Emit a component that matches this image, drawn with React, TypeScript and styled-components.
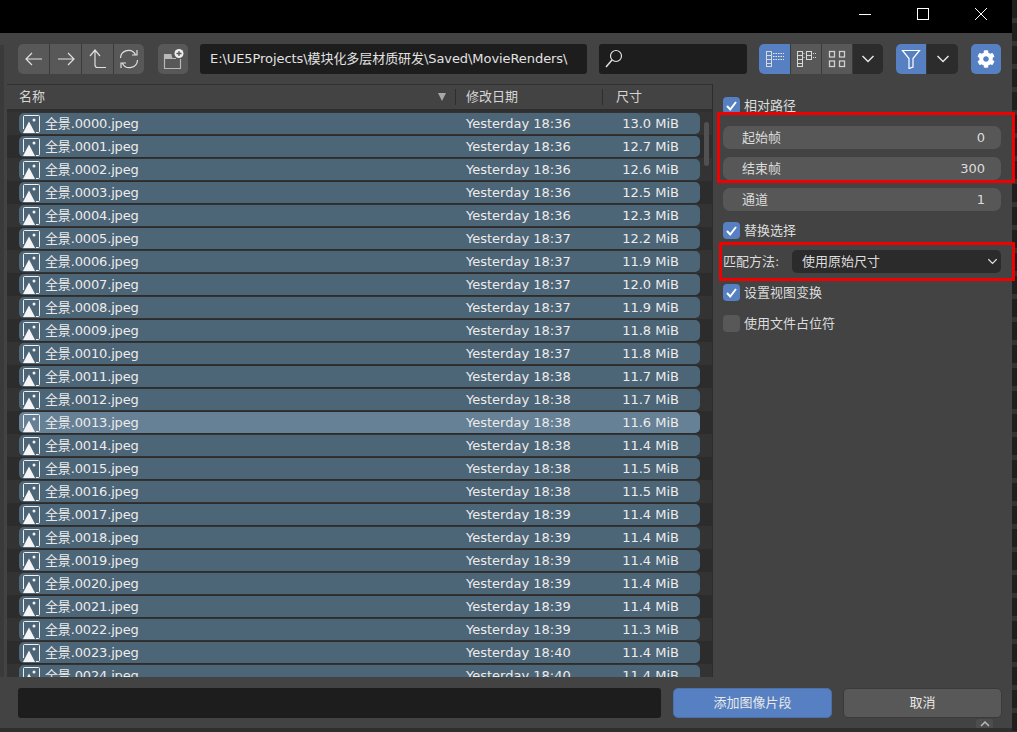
import React from "react";
import styled, { createGlobalStyle } from "styled-components";
import { FaCog } from "react-icons/fa";

const FONT = `"DejaVu Sans", "Noto Sans CJK SC", sans-serif`;

const GlobalStyle = createGlobalStyle`
  html, body {
    margin: 0;
    padding: 0;
    background: #434343;
    overflow: hidden;
  }
`;

const Page = styled.div`
  width: 1017px;
  height: 732px;
  display: flex;
  overflow: hidden;
  font-family: ${FONT};
  font-size: 13px;
  line-height: 16px;
  color: #e4e4e4;
`;
const Dialog = styled.div`
  width: 1012px;
  display: flex;
  flex-direction: column;
  background: #434343;
`;
const EdgeStrip = styled.div`
  width: 5px;
  background: repeating-linear-gradient(#1f1f1f 0 18px, #333 18px 23px);
`;
const TitleBar = styled.div`
  height: 33px;
  flex: none;
  background: #000;
  display: flex;
  justify-content: flex-end;
  padding-right: 2px;
`;
const WindowButton = styled.div`
  width: 58px;
  height: 27px;
  display: flex;
  align-items: center;
  justify-content: center;
`;
const Toolbar = styled.div`
  height: 51px;
  flex: none;
  box-sizing: border-box;
  padding: 11px 11px 0 18px;
  display: flex;
  align-items: flex-start;
`;
const Group = styled.div<{ $left?: number }>`
  display: flex;
  height: 30px;
  border-radius: 5px;
  overflow: hidden;
  margin-left: ${(p) => p.$left ?? 0}px;
  gap: 1px;
  background: #3a3a3a;
  flex: none;
`;
const ToolButton = styled.div<{ $w?: number; $on?: boolean; $dark?: boolean }>`
  width: ${(p) => p.$w ?? 31}px;
  height: 30px;
  display: flex;
  align-items: center;
  justify-content: center;
  background: ${(p) => (p.$on ? "#5680c2" : p.$dark ? "#2c2c2c" : "#585858")};
`;
const PathInput = styled.div<{ $w: number; $left: number }>`
  width: ${(p) => p.$w}px;
  margin-left: ${(p) => p.$left}px;
  height: 30px;
  flex: none;
  box-sizing: border-box;
  background: #1d1d1d;
  border-radius: 3px;
  padding-left: 10px;
  display: flex;
  align-items: center;
  color: #e2e2e2;
  white-space: nowrap;
  overflow: hidden;
  letter-spacing: -0.07px;
`;
const Middle = styled.div`
  height: 593px;
  flex: none;
  display: flex;
`;
const LeftGutter = styled.div`
  width: 7px;
  flex: none;
  box-sizing: border-box;
  border-left: 4px solid #3a3a3a;
  margin-top: -39px;
`;
const Browser = styled.div`
  width: 705px;
  flex: none;
  display: flex;
  flex-direction: column;
  position: relative;
  overflow: hidden;
`;
const HeaderRow = styled.div`
  height: 26px;
  flex: none;
  box-sizing: border-box;
  background: #434343;
  border-top: 1px solid #303030;
  border-bottom: 1px solid #2c2c2c;
  display: flex;
  align-items: center;
  color: #d6d6d6;
`;
const HeaderName = styled.div`
  width: 449px;
  box-sizing: border-box;
  padding: 0 9px 0 12px;
  display: flex;
  align-items: center;
  justify-content: space-between;
  height: 16px;
  border-right: 1px solid #2e2e2e;
`;
const HeaderDate = styled.div`
  width: 147px;
  box-sizing: border-box;
  padding-left: 10px;
  height: 16px;
  border-right: 1px solid #2e2e2e;
`;
const HeaderSize = styled.div`
  padding-left: 13px;
`;
const SortMark = styled.span`
  width: 0;
  height: 0;
  border-left: 4px solid transparent;
  border-right: 4px solid transparent;
  border-top: 8px solid #a8a8a8;
`;
const List = styled.div`
  flex: 1;
  padding-top: 2px;
  background: #2f2f2f;
  overflow: hidden;
`;
const Stripe = styled.div<{ $odd: boolean }>`
  height: 23px;
  box-sizing: border-box;
  padding: 1px 12px 1px 12px;
  background: ${(p) => (p.$odd ? "#2c2c2c" : "#333333")};
`;
const FileRow = styled.div<{ $active: boolean }>`
  height: 21px;
  border-radius: 5px;
  background: ${(p) => (p.$active ? "#668195" : "#4c6577")};
  display: grid;
  grid-template-columns: 447px 120px 1fr;
  align-items: center;
  padding-right: 21px;
  color: #ececec;
`;
const FileName = styled.div`
  display: flex;
  align-items: center;
  gap: 5px;
  padding-left: 4px;
  letter-spacing: -0.15px;
`;
const FileSize = styled.div`
  text-align: right;
`;
const ScrollThumb = styled.div`
  position: absolute;
  left: 697px;
  top: 38px;
  width: 5px;
  height: 44px;
  border-radius: 3px;
  background: #515151;
`;
const Side = styled.div`
  flex: 1;
  position: relative;
  box-sizing: border-box;
  padding: 13px 11px 0 10px;
  border-left: 1px solid #2c2c2c;
  display: flex;
  flex-direction: column;
`;
const CheckRow = styled.div<{ $top?: number }>`
  display: flex;
  align-items: center;
  gap: 4px;
  height: 17px;
  margin-top: ${(p) => p.$top ?? 0}px;
  color: #dcdcdc;
`;
const CheckBox = styled.div<{ $on: boolean }>`
  width: 17px;
  height: 17px;
  border-radius: 4px;
  background: ${(p) => (p.$on ? "#5680c2" : "#585858")};
  display: flex;
  align-items: center;
  justify-content: center;
`;
const Field = styled.div<{ $top: number }>`
  height: 23px;
  margin-top: ${(p) => p.$top}px;
  border-radius: 7px;
  background: #575757;
  display: flex;
  align-items: center;
  justify-content: space-between;
  padding: 0 16px 0 19px;
  color: #dcdcdc;
`;
const SelectRow = styled.div`
  margin-top: 11px;
  height: 23px;
  display: flex;
  align-items: center;
  justify-content: space-between;
  color: #dcdcdc;
`;
const SelectBox = styled.div`
  width: 209px;
  height: 23px;
  box-sizing: border-box;
  border-radius: 5px;
  background: #2b2b2b;
  padding: 0 4px 0 10px;
  display: flex;
  align-items: center;
  justify-content: space-between;
`;
const Highlight = styled.div<{ $left: number; $top: number; $w: number; $h: number }>`
  position: absolute;
  left: ${(p) => p.$left}px;
  top: ${(p) => p.$top}px;
  width: ${(p) => p.$w}px;
  height: ${(p) => p.$h}px;
  box-sizing: border-box;
  border: 3px solid #f00000;
  z-index: 5;
  pointer-events: none;
`;
const Footer = styled.div`
  height: 51px;
  flex: none;
  box-sizing: border-box;
  padding: 11px 10px 0 18px;
  display: flex;
  gap: 11px;
  position: relative;
`;
const NameInput = styled.div`
  width: 643px;
  height: 30px;
  margin-right: 1px;
  flex: none;
  background: #1d1d1d;
  border-radius: 3px;
`;
const ActionButton = styled.div<{ $primary?: boolean }>`
  width: 159px;
  height: 30px;
  flex: none;
  box-sizing: border-box;
  border-radius: 5px;
  display: flex;
  align-items: center;
  justify-content: center;
  background: ${(p) => (p.$primary ? "#5680c2" : "#585858")};
  border: 1px solid ${(p) => (p.$primary ? "#4b70aa" : "#3a3a3a")};
  color: #e8e8e8;
`;
const CornerTab = styled.div`
  position: absolute;
  right: 19px;
  bottom: 0;
  width: 17px;
  height: 9px;
  border-radius: 3px 3px 0 0;
  background: #4d4d4d;
  display: flex;
  align-items: center;
  justify-content: center;
`;
const BottomStrip = styled.div`
  flex: 1;
  background: #2f2f2f;
`;

const Stroke = { fill: "none", stroke: "#e0e0e0", strokeWidth: 1.2 };

const Chevron = ({ size = 12 }: { size?: number }) => (
  <svg width={size} height={size} viewBox="0 0 12 12">
    <path d="M0.500 3L6 8.500 11.500 3" fill="none" stroke="#e6e6e6" strokeWidth="1.500" />
  </svg>
);

const ImageIcon = () => (
  <svg width="17" height="18" viewBox="0 0 17 18">
    <path d="M0.500 14V1.500a1 1 0 0 1 1-1h14a1 1 0 0 1 1 1V16.500a1 1 0 0 1-1 1H13" fill="none" stroke="#f2f2f2" strokeWidth="1" />
    <path d="M0 18L6 6.500 12 18z" fill="#f4f4f4" />
    <circle cx="11" cy="5" r="1.500" fill="#f4f4f4" />
  </svg>
);

const Check = () => (
  <svg width="13" height="13" viewBox="0 0 13 13">
    <path d="M2 7l3.200 3.500L11 3" fill="none" stroke="#fff" strokeWidth="2" />
  </svg>
);

const ListIcon = ({ cols }: { cols: number }) => (
  <svg width="20" height="18" viewBox="0 0 20 18" fill="none" stroke="#d8d8d8">
    <rect x="1.500" y="1.500" width="5" height="4" />
    <rect x="1.500" y="5.500" width="5" height="4" />
    <rect x="1.500" y="9.500" width="5" height="4" />
    <rect x="1.500" y="13.500" width="5" height="3" />
    {cols === 1 ? (
      <path d="M8 3.500h11M8 6.500h11M8 9.500h11" stroke="#e8e8e8" strokeDasharray="1.500 1" />
    ) : (
      <>
        <rect x="10.500" y="1.500" width="5" height="4" />
        <rect x="10.500" y="5.500" width="5" height="4" />
        <path d="M7.500 3.500h2M7.500 7.500h2M17 3.500h3M17 7.500h3" strokeDasharray="1 1" />
      </>
    )}
  </svg>
);

const sizes = [
  "13.0", "12.7", "12.6", "12.5", "12.3", "12.2", "11.9", "12.0", "11.9", "11.8", "11.8", "11.7", "11.7",
  "11.6", "11.4", "11.5", "11.5", "11.4", "11.4", "11.4", "11.4", "11.4", "11.3", "11.4", "11.4",
];
const timeOf = (i: number) =>
  i < 5 ? "18:36" : i < 11 ? "18:37" : i < 17 ? "18:38" : i < 23 ? "18:39" : "18:40";

const files = sizes.map((size, i) => ({
  name: `全景.${String(i).padStart(4, "0")}.jpeg`,
  time: `Yesterday ${timeOf(i)}`,
  size: `${size} MiB`,
}));

const App = () => (
  <>
    <GlobalStyle />
    <Page>
      <Dialog>
        <TitleBar>
          <WindowButton>
            <svg width="14" height="14" viewBox="0 0 14 14"><path d="M1 7.500h12" stroke="#fff" /></svg>
          </WindowButton>
          <WindowButton>
            <svg width="14" height="14" viewBox="0 0 14 14"><rect x="1.500" y="1.500" width="11" height="11" fill="none" stroke="#fff" /></svg>
          </WindowButton>
          <WindowButton>
            <svg width="14" height="14" viewBox="0 0 14 14"><path d="M1 1l12 12M13 1L1 13" stroke="#fff" /></svg>
          </WindowButton>
        </TitleBar>

        <Toolbar>
          <Group>
            <ToolButton>
              <svg width="18" height="14" viewBox="0 0 18 14" {...Stroke}><path d="M17 7H1M7 1L1 7l6 6" /></svg>
            </ToolButton>
            <ToolButton>
              <svg width="18" height="14" viewBox="0 0 18 14" {...Stroke}><path d="M1 7h16M11 1l6 6-6 6" /></svg>
            </ToolButton>
            <ToolButton>
              <svg width="18" height="20" viewBox="0 0 18 20" {...Stroke}><path d="M1 7l5-6 5 6M6 1v15a2.500 2.500 0 0 0 2.500 2.500H17" /></svg>
            </ToolButton>
            <ToolButton $w={30}>
              <svg width="20" height="20" viewBox="0 0 20 20" {...Stroke}>
                <path d="M1.500 9a8 8 0 0 1 15-3.500M18.500 11a8 8 0 0 1-15 3.500M18 1v5h-5M2 19v-5h5" />
              </svg>
            </ToolButton>
          </Group>
          <Group $left={14}>
            <ToolButton $w={30}>
              <svg width="24" height="22" viewBox="0 0 24 22">
                <path d="M3 6.500h7.500M3.500 7v13.500h16V11M3.500 10.500H15" fill="none" stroke="#b8b8b8" strokeWidth="1.200" />
                <path d="M3 6h7l1.500 4H3z" fill="#b8b8b8" />
                <circle cx="18" cy="5.500" r="4.500" fill="#eee" />
                <path d="M18 3v5M15.500 5.500h5" stroke="#555" strokeWidth="1.300" />
              </svg>
            </ToolButton>
          </Group>
          <PathInput $w={387} $left={12}>E:\UE5Projects\模块化多层材质研发\Saved\MovieRenders\</PathInput>
          <PathInput $w={148} $left={12}>
            <svg width="19" height="20" viewBox="0 0 19 20" style={{ marginLeft: -5 }} {...Stroke}>
              <circle cx="12" cy="7" r="5.500" />
              <path d="M8 11L2 18" strokeWidth="1.500" />
            </svg>
          </PathInput>
          <Group $left={12}>
            <ToolButton $on><ListIcon cols={1} /></ToolButton>
            <ToolButton $w={30}><ListIcon cols={2} /></ToolButton>
            <ToolButton $w={30}>
              <svg width="20" height="18" viewBox="0 0 20 18" fill="none" stroke="#d0d0d0" strokeWidth="1.300">
                <rect x="2.500" y="1.500" width="5" height="5.500" />
                <rect x="12.500" y="1.500" width="5" height="5.500" />
                <rect x="2.500" y="11" width="5" height="5.500" />
                <rect x="12.500" y="11" width="5" height="5.500" />
              </svg>
            </ToolButton>
            <ToolButton $dark $w={30}><Chevron /></ToolButton>
          </Group>
          <Group $left={13}>
            <ToolButton $on $w={30}>
              <svg width="20" height="20" viewBox="0 0 20 20" fill="none" stroke="#fff" strokeWidth="1.200">
                <path d="M1.500 1.500h17L12 9.500V18l-4 1.500v-10z" />
              </svg>
            </ToolButton>
            <ToolButton $dark $w={31}><Chevron /></ToolButton>
          </Group>
          <Group $left={13}>
            <ToolButton $on $w={30}><FaCog size={18} color="#fff" /></ToolButton>
          </Group>
        </Toolbar>

        <Middle>
          <LeftGutter />
          <Browser>
            <HeaderRow>
              <HeaderName>名称<SortMark /></HeaderName>
              <HeaderDate>修改日期</HeaderDate>
              <HeaderSize>尺寸</HeaderSize>
            </HeaderRow>
            <List>
              {files.map((file, i) => (
                <Stripe key={file.name} $odd={i % 2 === 1}>
                  <FileRow $active={i === 13}>
                    <FileName><ImageIcon />{file.name}</FileName>
                    <div>{file.time}</div>
                    <FileSize>{file.size}</FileSize>
                  </FileRow>
                </Stripe>
              ))}
            </List>
            <ScrollThumb />
          </Browser>
          <Side>
            <CheckRow><CheckBox $on><Check /></CheckBox>相对路径</CheckRow>
            <Field $top={12}><span>起始帧</span><span>0</span></Field>
            <Field $top={8}><span>结束帧</span><span>300</span></Field>
            <Field $top={8}><span>通道</span><span>1</span></Field>
            <CheckRow $top={11}><CheckBox $on><Check /></CheckBox>替换选择</CheckRow>
            <SelectRow>
              匹配方法:
              <SelectBox>使用原始尺寸<Chevron size={9} /></SelectBox>
            </SelectRow>
            <CheckRow $top={11}><CheckBox $on><Check /></CheckBox>设置视图变换</CheckRow>
            <CheckRow $top={14}><CheckBox $on={false} />使用文件占位符</CheckRow>
            <Highlight $left={4} $top={28} $w={298} $h={71} />
            <Highlight $left={6} $top={158} $w={296} $h={39} />
          </Side>
        </Middle>

        <Footer>
          <NameInput />
          <ActionButton $primary>添加图像片段</ActionButton>
          <ActionButton>取消</ActionButton>
          <CornerTab>
            <svg width="10" height="7" viewBox="0 0 10 7"><path d="M1 6l4-4 4 4" fill="none" stroke="#bbb" strokeWidth="1.500" /></svg>
          </CornerTab>
        </Footer>
        <BottomStrip />
      </Dialog>
      <EdgeStrip />
    </Page>
  </>
);

export default App;
